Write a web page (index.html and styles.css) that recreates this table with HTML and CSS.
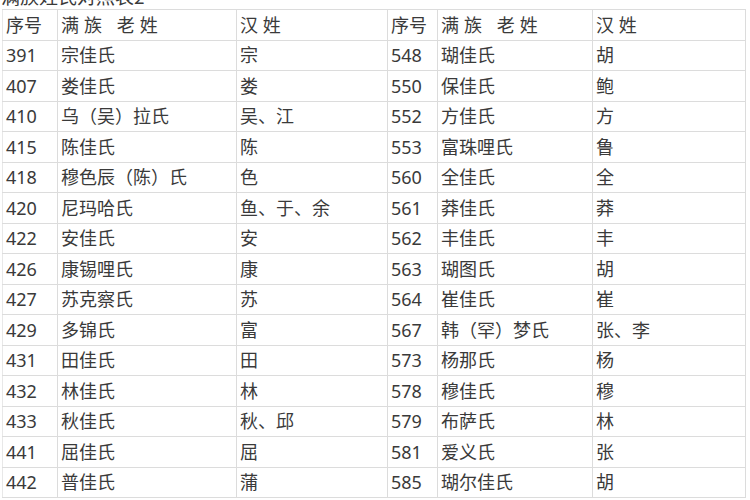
FILE: index.html
```html
<!DOCTYPE html>
<html lang="zh">
<head>
<meta charset="utf-8">
<link rel="stylesheet" href="styles.css">
</head>
<body>
<div class="title"><span>满族姓氏对照表2</span></div>
<table class="tbl">
  <colgroup>
    <col class="c1"><col class="c2"><col class="c3"><col class="c4"><col class="c5"><col class="c6">
  </colgroup>
  <tr><td>序号</td><td class="sp">满族 老姓</td><td>汉 姓</td><td>序号</td><td class="sp">满族 老姓</td><td>汉 姓</td></tr>
  <tr><td>391</td><td>宗佳氏</td><td>宗</td><td>548</td><td>瑚佳氏</td><td>胡</td></tr>
  <tr><td>407</td><td>娄佳氏</td><td>娄</td><td>550</td><td>保佳氏</td><td>鲍</td></tr>
  <tr><td>410</td><td>乌（吴）拉氏</td><td>吴、江</td><td>552</td><td>方佳氏</td><td>方</td></tr>
  <tr><td>415</td><td>陈佳氏</td><td>陈</td><td>553</td><td>富珠哩氏</td><td>鲁</td></tr>
  <tr><td>418</td><td>穆色辰（陈）氏</td><td>色</td><td>560</td><td>全佳氏</td><td>全</td></tr>
  <tr><td>420</td><td>尼玛哈氏</td><td>鱼、于、余</td><td>561</td><td>莽佳氏</td><td>莽</td></tr>
  <tr><td>422</td><td>安佳氏</td><td>安</td><td>562</td><td>丰佳氏</td><td>丰</td></tr>
  <tr><td>426</td><td>康锡哩氏</td><td>康</td><td>563</td><td>瑚图氏</td><td>胡</td></tr>
  <tr><td>427</td><td>苏克察氏</td><td>苏</td><td>564</td><td>崔佳氏</td><td>崔</td></tr>
  <tr><td>429</td><td>多锦氏</td><td>富</td><td>567</td><td>韩（罕）梦氏</td><td>张、李</td></tr>
  <tr><td>431</td><td>田佳氏</td><td>田</td><td>573</td><td>杨那氏</td><td>杨</td></tr>
  <tr><td>432</td><td>林佳氏</td><td>林</td><td>578</td><td>穆佳氏</td><td>穆</td></tr>
  <tr><td>433</td><td>秋佳氏</td><td>秋、邱</td><td>579</td><td>布萨氏</td><td>林</td></tr>
  <tr><td>441</td><td>屈佳氏</td><td>屈</td><td>581</td><td>爱义氏</td><td>张</td></tr>
  <tr><td>442</td><td>普佳氏</td><td>蒲</td><td>585</td><td>瑚尔佳氏</td><td>胡</td></tr>
</table>
</body>
</html>
```
FILE: styles.css
```css
html, body {
  margin: 0;
  padding: 0;
  background: #ffffff;
}
body {
  width: 750px;
  height: 500px;
  overflow: hidden;
  font-family: "Noto Sans", "Noto Sans CJK SC", sans-serif;
  color: #3a3a3a;
}
.title {
  height: 9px;
  overflow: hidden;
  display: flex;
  align-items: flex-end;
  padding-left: 1px;
  font-family: "Noto Sans CJK SC", sans-serif;
  font-size: 19px;
  color: #3a3a3a;
}
.title span {
  display: block;
  line-height: normal;
}
.tbl {
  margin-left: 2px;
  border-collapse: collapse;
  table-layout: fixed;
  width: 743px;
  font-size: 18px;
}
.c1 { width: 55px; }
.c2 { width: 179px; }
.c3 { width: 151px; }
.c4 { width: 50px; }
.c5 { width: 155px; }
.c6 { width: 153px; }
.tbl td {
  border: 1px solid #dcdcdc;
  height: 29.5px;
  padding: 0 0 0 3px;
  line-height: 20px;
  white-space: nowrap;
  vertical-align: middle;
  font-family: "Noto Sans", "Noto Sans CJK SC", sans-serif;
}
.tbl tr td:first-child {
  border-left-color: #e8e8e8;
}
.sp {
  letter-spacing: 5px;
}
```
